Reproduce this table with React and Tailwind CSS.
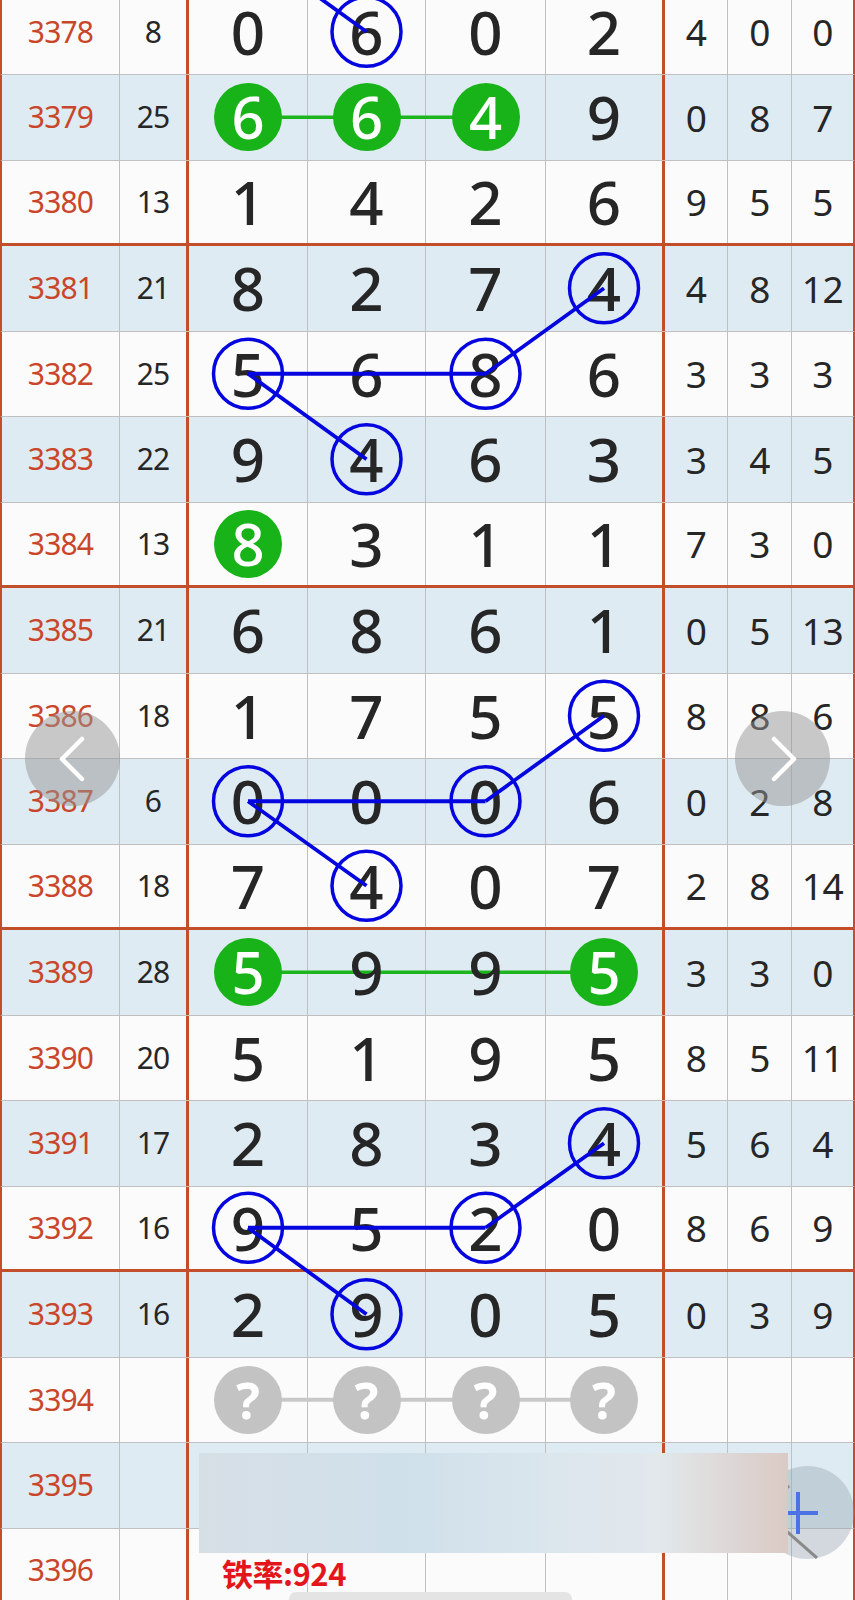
import React from "react";

const ROWS = [
  [3378, "8", [0, 6, 0, 2], [4, 0, 0]],
  [3379, "25", [6, 6, 4, 9], [0, 8, 7]],
  [3380, "13", [1, 4, 2, 6], [9, 5, 5]],
  [3381, "21", [8, 2, 7, 4], [4, 8, 12]],
  [3382, "25", [5, 6, 8, 6], [3, 3, 3]],
  [3383, "22", [9, 4, 6, 3], [3, 4, 5]],
  [3384, "13", [8, 3, 1, 1], [7, 3, 0]],
  [3385, "21", [6, 8, 6, 1], [0, 5, 13]],
  [3386, "18", [1, 7, 5, 5], [8, 8, 6]],
  [3387, "6", [0, 0, 0, 6], [0, 2, 8]],
  [3388, "18", [7, 4, 0, 7], [2, 8, 14]],
  [3389, "28", [5, 9, 9, 5], [3, 3, 0]],
  [3390, "20", [5, 1, 9, 5], [8, 5, 11]],
  [3391, "17", [2, 8, 3, 4], [5, 6, 4]],
  [3392, "16", [9, 5, 2, 0], [8, 6, 9]],
  [3393, "16", [2, 9, 0, 5], [0, 3, 9]],
  [3394, "", ["?", "?", "?", "?"], ["", "", ""]],
  [3395, "", ["", "", "", ""], ["", "", ""]],
  [3396, "", ["", "", "", ""], ["", "", ""]],
];

const GREEN = new Set(["1-0", "1-1", "1-2", "6-0", "11-0", "11-3"]);
const COLX = [248, 366.5, 485.5, 604];
const TOP = -10.5;
const PITCH = 85.5;
const isRed = (i) => (i - 2) % 4 === 0 && i >= 2;
const cy = (i) => TOP + PITCH * i + (isRed(i) ? 41.25 : 42.25);
const P = (i, c) => [COLX[c], cy(i)];

const BLUE_CIRCLES = [
  [0, 1], [3, 3], [4, 0], [4, 2], [5, 1],
  [8, 3], [9, 0], [9, 2], [10, 1],
  [13, 3], [14, 0], [14, 2], [15, 1],
];
const BLUE_LINES = [[[-1, 0], [0, 1]]];
[4, 9, 14].forEach((b) => {
  BLUE_LINES.push([[b, 0], [b, 2]]);
  BLUE_LINES.push([[b, 2], [b - 1, 3]]);
  BLUE_LINES.push([[b, 0], [b + 1, 1]]);
});

const DIGIT_W = ["w-[119px]", "w-[118px]", "w-[120px]", "w-[119px]"];
const DIGIT_B = [
  "border-r border-r-[#c0c0c0]",
  "border-r border-r-[#c0c0c0]",
  "border-r border-r-[#c0c0c0]",
  "border-r-[3px] border-r-[#c24f2a]",
];
const RIGHT_W = [
  "w-[63px] border-r border-r-[#c0c0c0]",
  "w-[64px] border-r border-r-[#c0c0c0]",
  "flex-1",
];

function DigitCell({ i, c, v }) {
  let inner = null;
  if (v === "?") {
    inner = (
      <span className="relative z-10 flex h-[68px] w-[68px] items-center justify-center rounded-full bg-[#c3c3c3] text-[50px] font-bold leading-none text-white">
        ?
      </span>
    );
  } else if (GREEN.has(`${i}-${c}`)) {
    inner = (
      <span className="relative z-10 flex h-[68px] w-[68px] items-center justify-center rounded-full bg-[#18b318] text-[58px] font-medium leading-none text-white">
        {v}
      </span>
    );
  } else if (v !== "") {
    inner = (
      <span className="relative z-10 text-[60px] font-medium leading-none text-[#262626]">{v}</span>
    );
  }
  return (
    <div className={`flex h-full items-center justify-center ${DIGIT_W[c]} ${DIGIT_B[c]}`}>
      {inner}
    </div>
  );
}

function Row({ row, i }) {
  const [period, sum, digits, right] = row;
  const bg = period % 2 === 1 ? "bg-[#deebf3]" : "bg-[#fbfbfb]";
  const bb = isRed(i)
    ? "border-b-[3px] border-b-[#c24f2a]"
    : "border-b border-b-[#c0c0c0]";
  return (
    <div
      className={`flex h-[85.5px] border-l-2 border-r-2 border-l-[#c24f2a] border-r-[#c24f2a] ${bb} ${bg}`}
    >
      <div className="flex h-full w-[118px] items-center justify-center border-r border-r-[#c0c0c0] text-[30px] leading-none tracking-[-0.8px] text-[#c9462a]">
        {period}
      </div>
      <div className="flex h-full w-[69px] items-center justify-center border-r-[3px] border-r-[#c24f2a] text-[30px] leading-none tracking-[-0.8px] text-[#262626]">
        {sum}
      </div>
      {digits.map((v, c) => (
        <DigitCell key={c} i={i} c={c} v={v} />
      ))}
      {right.map((v, k) => (
        <div
          key={k}
          className={`flex h-full items-center justify-center text-[37px] leading-none tracking-[-0.5px] text-[#262626] ${RIGHT_W[k]}`}
        >
          {v}
        </div>
      ))}
    </div>
  );
}

function NavButton({ left }) {
  return (
    <div
      className={`absolute top-[711px] z-30 flex h-[95px] w-[95px] items-center justify-center rounded-full bg-[rgba(150,150,150,0.5)] ${
        left ? "left-[25px]" : "left-[735px]"
      }`}
    >
      <svg width="40" height="50" viewBox="0 0 40 50">
        {left ? (
          <polyline points="29,5 9,25 29,45" fill="none" stroke="white" strokeWidth="4.5" strokeLinecap="round" strokeLinejoin="round" />
        ) : (
          <polyline points="11,5 31,25 11,45" fill="none" stroke="white" strokeWidth="4.5" strokeLinecap="round" strokeLinejoin="round" />
        )}
      </svg>
    </div>
  );
}

export default function App() {
  return (
    <div className="relative h-[1600px] w-[855px] overflow-hidden bg-[#fbfbfb] font-['Noto_Sans','Noto_Sans_CJK_SC',sans-serif]">
      <div className="mt-[-10.5px]">
        {ROWS.map((row, i) => (
          <Row key={row[0]} row={row} i={i} />
        ))}
      </div>

      {/* lines beneath the filled balls */}
      <svg className="pointer-events-none absolute left-0 top-0 z-[5]" width="855" height="1600" viewBox="0 0 855 1600">
        <line x1={P(1, 0)[0]} y1={P(1, 0)[1]} x2={P(1, 2)[0]} y2={P(1, 2)[1]} stroke="#1db51d" strokeWidth="3.5" />
        <line x1={P(11, 0)[0]} y1={P(11, 0)[1]} x2={P(11, 3)[0]} y2={P(11, 3)[1]} stroke="#1db51d" strokeWidth="3.5" />
        <line x1={P(16, 0)[0]} y1={P(16, 0)[1]} x2={P(16, 3)[0]} y2={P(16, 3)[1]} stroke="#c8c8c8" strokeWidth="4" />
      </svg>

      {/* blue pattern above digits */}
      <svg className="pointer-events-none absolute left-0 top-0 z-20" width="855" height="1600" viewBox="0 0 855 1600">
        {BLUE_LINES.map(([a, b], k) => {
          const [x1, y1] = P(a[0], a[1]);
          const [x2, y2] = P(b[0], b[1]);
          return <line key={k} x1={x1} y1={y1} x2={x2} y2={y2} stroke="#0505e0" strokeWidth="3.8" />;
        })}
        {BLUE_CIRCLES.map(([i, c], k) => {
          const [x, y] = P(i, c);
          return <circle key={k} cx={x} cy={y} r="34.5" fill="none" stroke="#0505e0" strokeWidth="3.5" />;
        })}
      </svg>

      <NavButton left />
      <NavButton />

      {/* floating plus button */}
      <div className="absolute left-[761px] top-[1466px] z-30 h-[93px] w-[93px] rounded-full bg-[rgba(150,165,178,0.4)]">
        <svg className="absolute left-0 top-0" width="93" height="93" viewBox="0 0 93 93">
          <line x1="17" y1="47" x2="57" y2="47" stroke="#4d72e6" strokeWidth="4" />
          <line x1="37" y1="26" x2="37" y2="68" stroke="#4d72e6" strokeWidth="4" />
          <line x1="14" y1="55" x2="56" y2="92" stroke="#8a8a8a" strokeWidth="3" />
          <line x1="14" y1="6" x2="28" y2="22" stroke="#8a8a8a" strokeWidth="3" />
        </svg>
      </div>

      {/* bottom banner */}
      <div className="absolute left-[199px] top-[1453px] z-40 h-[100px] w-[589px] bg-[linear-gradient(90deg,#d7dfe6_0%,#cfe0ea_35%,#dbe6ed_60%,#e2e8ec_78%,#dacac4_100%)]" />

      <div className="absolute left-[222px] top-[1553px] z-40 text-[31px] font-bold leading-[40px] tracking-[-0.5px] text-[#e3161b] font-['Noto_Sans_CJK_SC','Noto_Sans',sans-serif]">
        铁率:924
      </div>

      <div className="absolute left-[289px] top-[1592px] z-40 h-[14px] w-[283px] rounded-full bg-[#e4e4e4]" />
    </div>
  );
}
